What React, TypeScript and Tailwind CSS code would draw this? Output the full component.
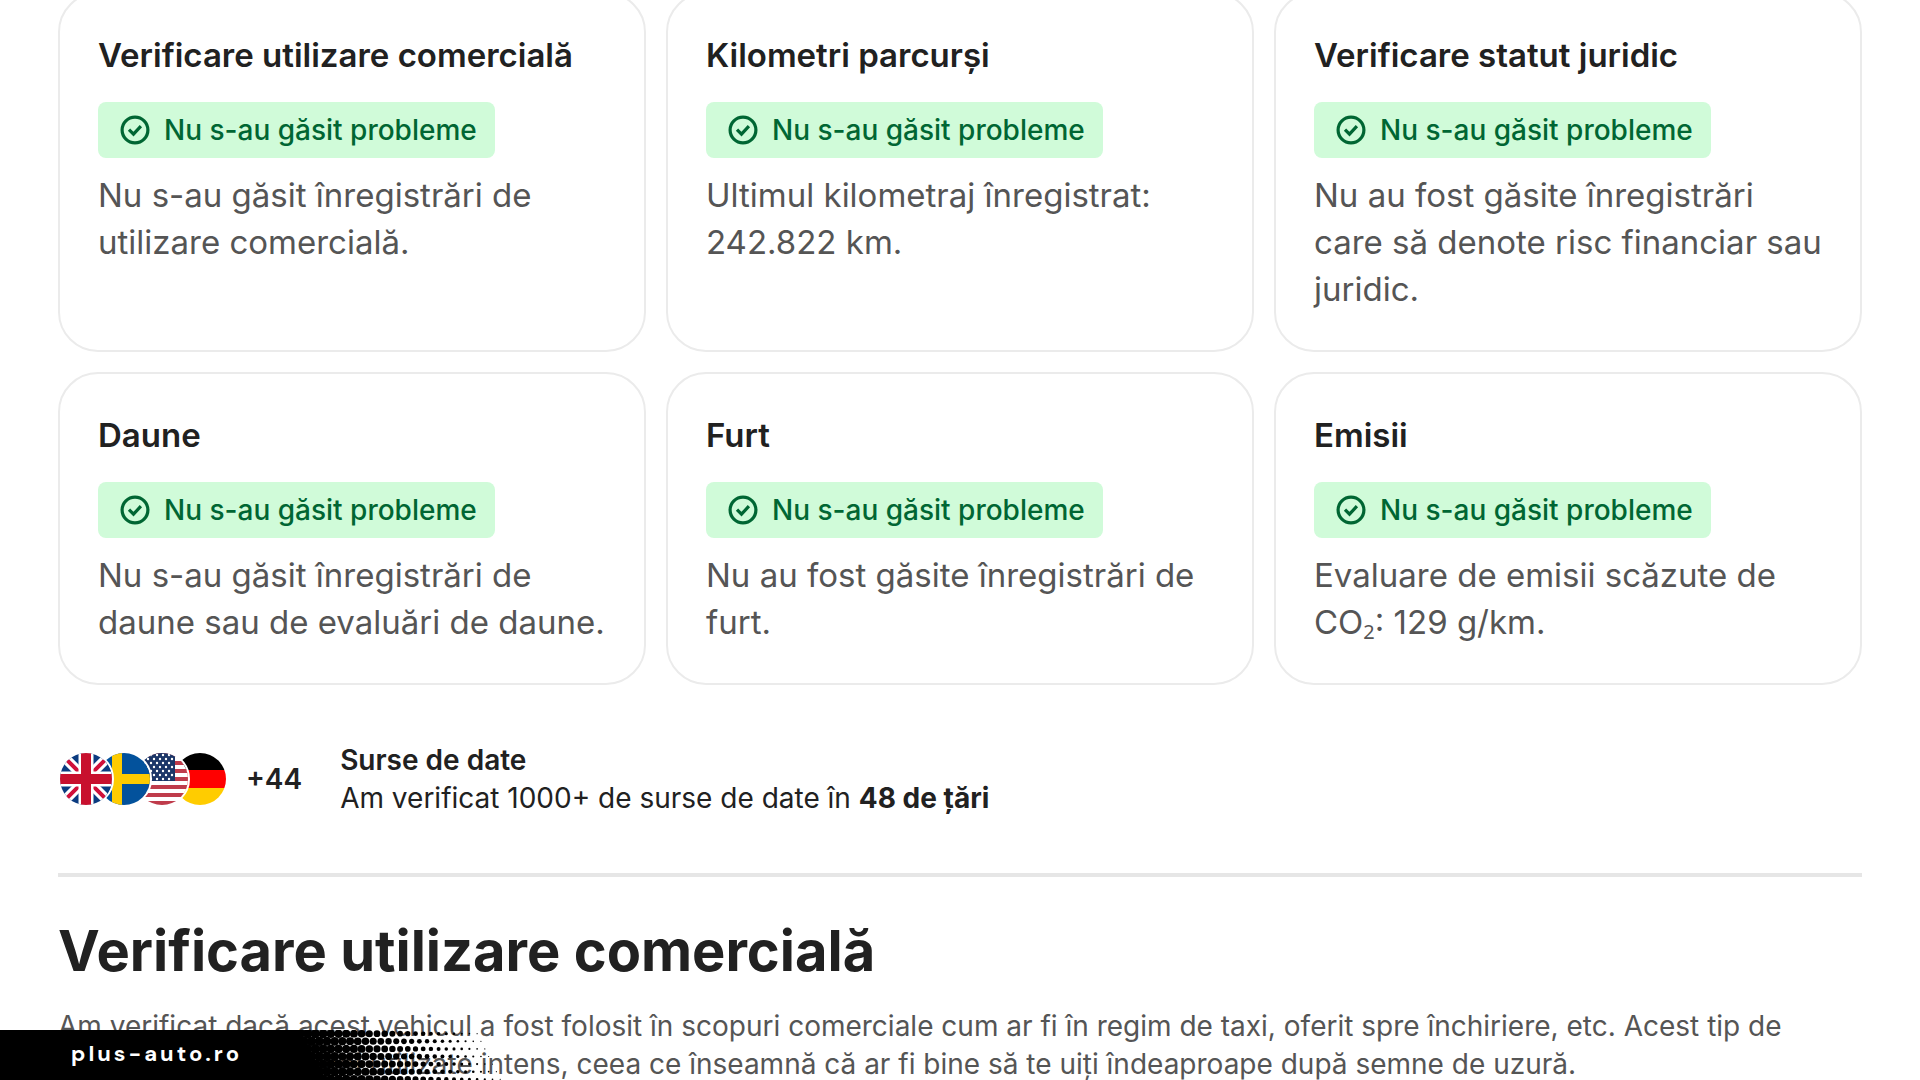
import { Fragment } from 'react';

interface CheckCardProps {
  title: string;
  status: string;
  description: React.ReactNode;
}

const checks: CheckCardProps[] = [
  {
    title: 'Verificare utilizare comercială',
    status: 'Nu s-au găsit probleme',
    description: 'Nu s-au găsit înregistrări de utilizare comercială.',
  },
  {
    title: 'Kilometri parcurși',
    status: 'Nu s-au găsit probleme',
    description: 'Ultimul kilometraj înregistrat: 242.822 km.',
  },
  {
    title: 'Verificare statut juridic',
    status: 'Nu s-au găsit probleme',
    description: 'Nu au fost găsite înregistrări care să denote risc financiar sau juridic.',
  },
  {
    title: 'Daune',
    status: 'Nu s-au găsit probleme',
    description: 'Nu s-au găsit înregistrări de daune sau de evaluări de daune.',
  },
  {
    title: 'Furt',
    status: 'Nu s-au găsit probleme',
    description: 'Nu au fost găsite înregistrări de furt.',
  },
  {
    title: 'Emisii',
    status: 'Nu s-au găsit probleme',
    description: (
      <>
        Evaluare de emisii scăzute de CO<sub className="font-['Noto_Sans',sans-serif] text-[20px]">2</sub>: 129 g/km.
      </>
    ),
  },
];

function CheckCircle() {
  return (
    <svg viewBox="0 0 30 30" className="size-[30px] shrink-0" fill="none" stroke="currentColor" aria-hidden="true">
      <circle cx="15" cy="15" r="12.9" strokeWidth="3.2" />
      <path d="M9 14.6l4.5 4.6 7.4-8" strokeWidth="3.2" />
    </svg>
  );
}

function CheckCard({ title, status, description }: CheckCardProps) {
  return (
    <article className="rounded-[40px] border-2 border-[#ebebeb] px-[38px] py-[37px]">
      <h3 className="text-[33px] leading-[48px] font-semibold text-[#212121]">{title}</h3>
      <div className="mt-[23px] flex h-14 w-fit items-center gap-[14px] rounded-lg bg-[#d0fbd9] pr-[18px] pl-[22px] text-[#006633]">
        <CheckCircle />
        <span className="text-[28px] leading-10 font-medium">{status}</span>
      </div>
      <p className="mt-[14px] text-[33px] leading-[47px] text-[#555]">{description}</p>
    </article>
  );
}

function FlagUK() {
  return (
    <svg viewBox="0 0 52 52" className="size-full">
      <rect width="52" height="52" fill="#0b3b80" />
      <path d="M0 0l52 52M52 0L0 52" stroke="#fff" strokeWidth="10" />
      <path d="M0 0l52 52M52 0L0 52" stroke="#d0103a" strokeWidth="4" />
      <path d="M26 0v52M0 26h52" stroke="#fff" strokeWidth="15" />
      <path d="M26 0v52M0 26h52" stroke="#c8102e" strokeWidth="10" />
    </svg>
  );
}

function FlagSweden() {
  return (
    <svg viewBox="0 0 52 52" className="size-full">
      <rect width="52" height="52" fill="#03529c" />
      <path d="M19 0v52M0 26h52" stroke="#fecb00" strokeWidth="10" />
    </svg>
  );
}

function FlagUSA() {
  return (
    <svg viewBox="0 0 52 52" className="size-full">
      <rect width="52" height="52" fill="#fff" />
      {[0, 8, 16, 24, 32, 40, 48].map((y) => (
        <rect key={y} y={y} width="52" height="4" fill="#bf3b4b" />
      ))}
      <rect width="39" height="28" fill="#1b3668" />
      {[2, 6, 10, 14, 18, 22, 26].map((y, row) => (
        <Fragment key={y}>
          {[3, 9, 15, 21, 27, 33].map((x) => (
            <circle key={x} cx={x + (row % 2) * 3} cy={y} r="1.2" fill="#fff" />
          ))}
        </Fragment>
      ))}
    </svg>
  );
}

function FlagGermany() {
  return (
    <svg viewBox="0 0 52 52" className="size-full">
      <rect width="52" height="17" fill="#000" />
      <rect y="17" width="52" height="18" fill="#f00" />
      <rect y="35" width="52" height="17" fill="#fc0" />
    </svg>
  );
}

const flags = [
  { name: 'Regatul Unit', Flag: FlagUK, className: 'z-40' },
  { name: 'Suedia', Flag: FlagSweden, className: 'z-30' },
  { name: 'Statele Unite', Flag: FlagUSA, className: 'z-20' },
  { name: 'Germania', Flag: FlagGermany, className: 'z-10' },
];

function DataSources() {
  return (
    <section className="mt-14 flex items-center text-[#212121]">
      <ul className="flex -space-x-[18px]">
        {flags.map(({ name, Flag, className }) => (
          <li
            key={name}
            aria-label={name}
            className={`relative size-14 overflow-hidden rounded-full border-2 border-white ${className}`}
          >
            <Flag />
          </li>
        ))}
      </ul>
      <span className="ml-[18px] text-[28px] leading-10 font-semibold">+44</span>
      <div className="ml-[38px] text-[28px] leading-[38px]">
        <h4 className="font-semibold">Surse de date</h4>
        <p>
          Am verificat 1000+ de surse de date în <strong className="font-bold">48 de țări</strong>
        </p>
      </div>
    </section>
  );
}

// Dots shrink from left to right, so the black bar fades into the page
function Halftone() {
  const dots = [];
  for (let row = -1; row < 8; row++) {
    for (let col = -4; col < 25; col++) {
      const t = (col * 7.7) / 164;
      const r = t < 0 ? 5.6 : 4.9 - 2.6 * t - 1.3 * t * t;
      if (r > 0.5) {
        dots.push(<circle key={`${row}-${col}`} cx={col * 7.7 + row * 3.85} cy={row * 7.6 + 3.7} r={r} />);
      }
    }
  }
  return (
    <svg viewBox="0 0 220 50" className="h-[50px] w-[220px]" aria-hidden="true">
      {dots}
    </svg>
  );
}

function Watermark() {
  return (
    <div className="fixed bottom-0 left-0 z-50 flex h-[50px]">
      <div className="flex w-[300px] items-center bg-black pb-[2px] pl-[71px] text-white">
        <a href="#" className="font-['DM_Sans','Inter',sans-serif] text-[22px] leading-7 font-bold tracking-[3px]">
          plus-auto.ro
        </a>
      </div>
      <Halftone />
    </div>
  );
}

export default function App() {
  return (
    <div className="h-screen overflow-hidden bg-white font-['Inter',sans-serif]">
      <main className="-mt-2 px-[58px]">
        <section className="grid grid-cols-3 gap-5">
          {checks.map((check) => (
            <CheckCard key={check.title} {...check} />
          ))}
        </section>
        <DataSources />
        <hr className="mt-14 border-t-4 border-[#e6e6e6]" />
        <section className="mt-9">
          <h2 className="text-[56px] leading-[76px] font-bold text-[#212121]">Verificare utilizare comercială</h2>
          <p className="mt-[18px] text-[28px] leading-[38px] text-[#555]">
            Am verificat dacă acest vehicul a fost folosit în scopuri comerciale cum ar fi în regim de taxi, oferit
            spre închiriere, etc. Acest tip de vehicule sunt de obicei utilizate intens, ceea ce înseamnă că ar fi
            bine să te uiți îndeaproape după semne de uzură.
          </p>
        </section>
      </main>
      <Watermark />
    </div>
  );
}
